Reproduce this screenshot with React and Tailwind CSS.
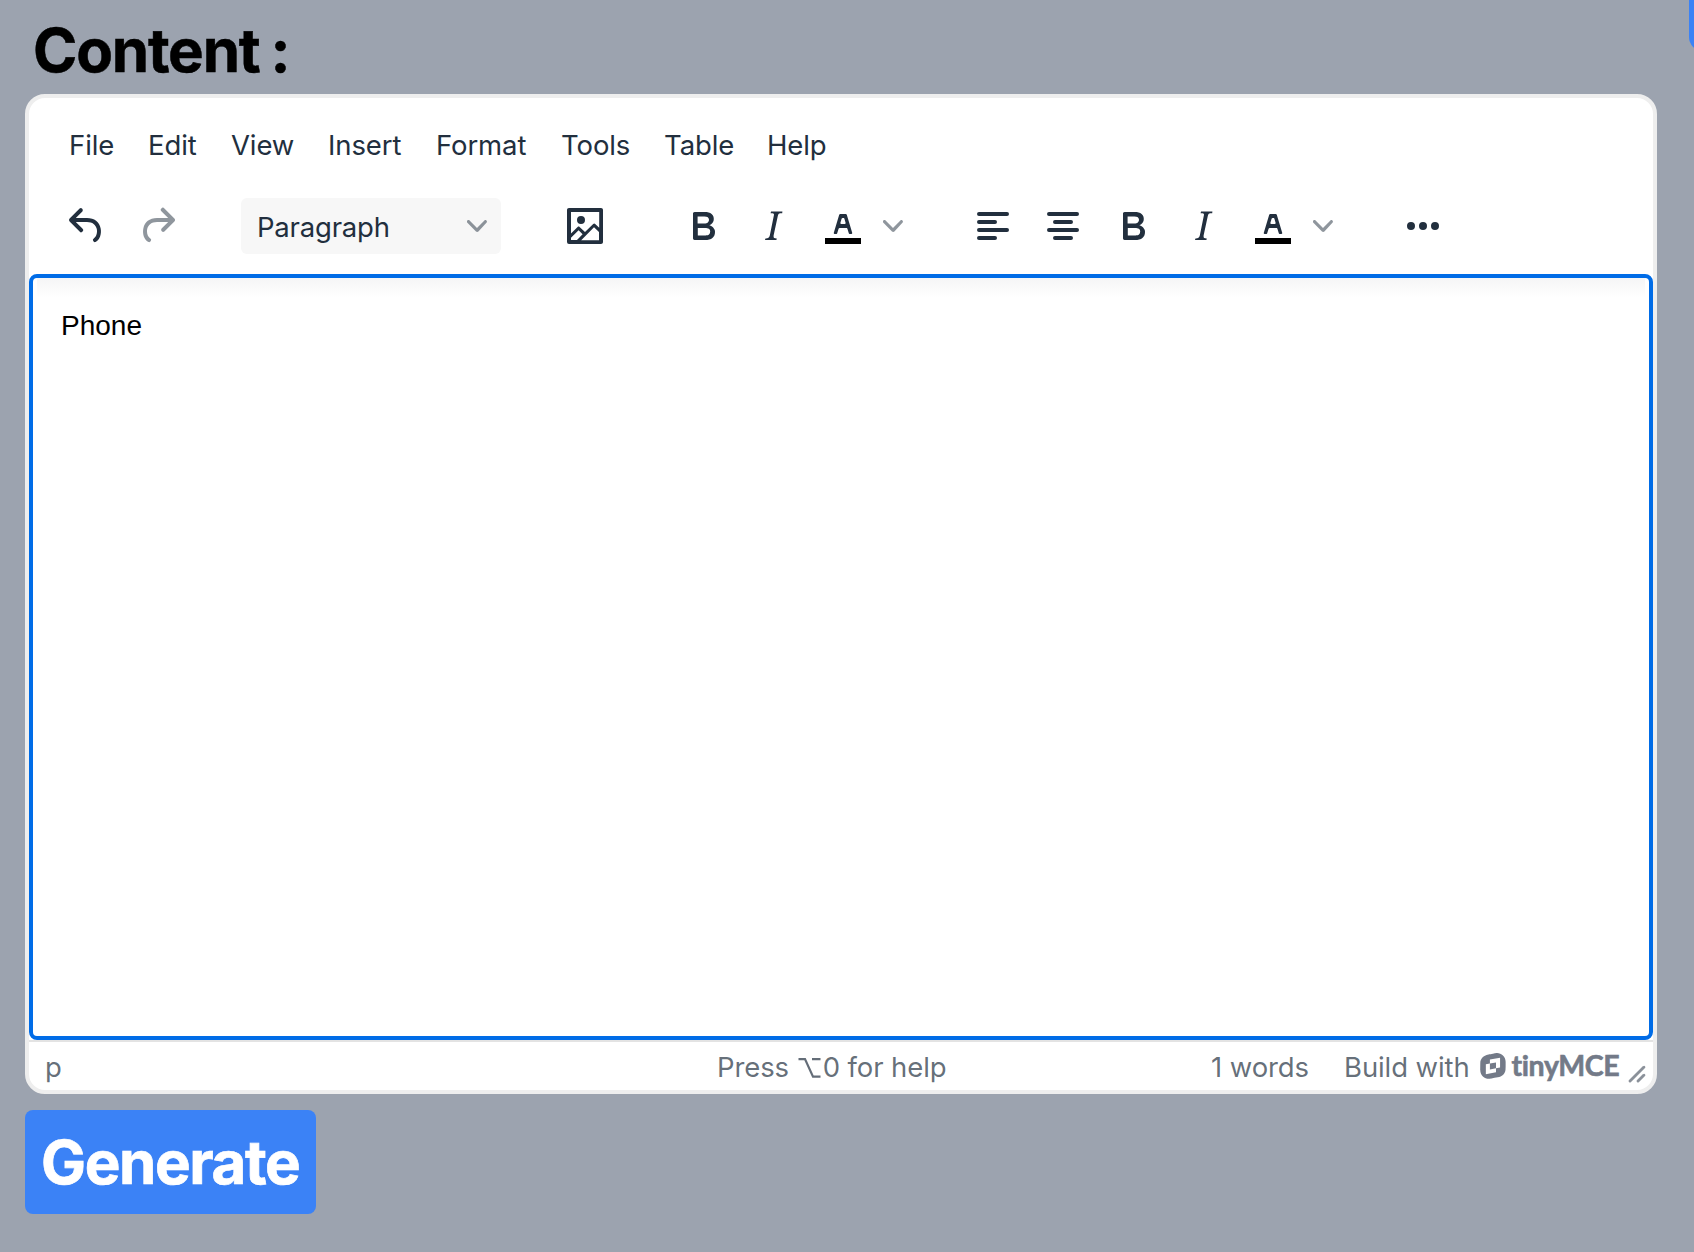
const ICONS = {
  undo: "M6.4 8H12c3.7 0 6.2 2 6.8 5.1.6 2.7-.4 5.6-2.3 6.8a1 1 0 0 1-1-1.8c1.1-.6 1.8-2.7 1.4-4.6-.5-2.1-2.1-3.5-4.9-3.5H6.4l3.3 3.3a1 1 0 1 1-1.4 1.4l-5-5a1 1 0 0 1 0-1.4l5-5a1 1 0 0 1 1.4 1.4L6.4 8Z",
  redo: "M17.6 10H12c-2.8 0-4.4 1.4-4.9 3.5-.4 2 .3 4 1.4 4.6a1 1 0 1 1-1 1.8c-2-1.2-2.9-4.1-2.3-6.8.6-3 3-5.1 6.8-5.1h5.6l-3.3-3.3a1 1 0 1 1 1.4-1.4l5 5a1 1 0 0 1 0 1.4l-5 5a1 1 0 0 1-1.4-1.4l3.3-3.3Z",
  image: "m5 15.7 3.3-3.2c.3-.3.7-.3 1 0L12 15l4.1-4c.3-.4.8-.4 1 0l2 1.9V5H5v10.7ZM5 18V19h3l2.8-2.9-2-2L5 17.9Zm14-3-2.5-2.4-6.4 6.5H19v-4ZM4 3h16c.6 0 1 .4 1 1v16c0 .6-.4 1-1 1H4a1 1 0 0 1-1-1V4c0-.6.4-1 1-1Zm6 8a2 2 0 1 0 0-4 2 2 0 0 0 0 4Z",
  bold: "M7.8 19c-.3 0-.5 0-.6-.2l-.2-.5V5.7c0-.2 0-.4.2-.5l.6-.2h5c1.5 0 2.7.3 3.5 1 .7.6 1.1 1.4 1.1 2.5a3 3 0 0 1-.6 1.9c-.4.6-1 1-1.6 1.2.4.1.9.3 1.3.6s.8.7 1 1.2c.4.4.5 1 .5 1.6 0 1.3-.4 2.3-1.3 3-.8.7-2.1 1-3.8 1H7.8Zm5-8.3c.6 0 1.2-.1 1.6-.5.4-.3.6-.7.6-1.3 0-1.1-.8-1.7-2.3-1.7H9.3v3.5h3.4Zm.5 6c.7 0 1.3-.1 1.7-.4.4-.4.6-.9.6-1.5s-.2-1-.7-1.4c-.4-.3-1-.4-2-.4H9.4v3.8h4Z",
  italic: "m16.7 4.7-.1.9h-.3c-.6 0-1 0-1.4.3-.3.3-.4.6-.5 1.1l-2.1 9.8v.6c0 .5.4.8 1.4.8h.2l-.2.8H8l.2-.8h.2c1.1 0 1.8-.5 2-1.5l2-9.8.1-.5c0-.6-.4-.8-1.4-.8h-.3l.2-.9h5.8Z",
  alignLeft: "M5 5h14a1 1 0 0 1 0 2H5a1 1 0 1 1 0-2Zm0 4h8a1 1 0 0 1 0 2H5a1 1 0 1 1 0-2Zm0 8h8a1 1 0 0 1 0 2H5a1 1 0 0 1 0-2Zm0-4h14a1 1 0 0 1 0 2H5a1 1 0 0 1 0-2Z",
  alignCenter: "M5 5h14a1 1 0 0 1 0 2H5a1 1 0 1 1 0-2Zm3 4h8a1 1 0 0 1 0 2H8a1 1 0 1 1 0-2Zm0 8h8a1 1 0 0 1 0 2H8a1 1 0 0 1 0-2Zm-3-4h14a1 1 0 0 1 0 2H5a1 1 0 0 1 0-2Z",
  more: "M6 10a2 2 0 1 0 0 4 2 2 0 0 0 0-4Zm12 0a2 2 0 1 0 0 4 2 2 0 0 0 0-4Zm-6 0a2 2 0 1 0 0 4 2 2 0 0 0 0-4Z",
};

function ToolButton({ icon, disabled }) {
  return (
    <button className="flex h-14 w-[68px] items-center justify-center">
      <svg viewBox="0 0 24 24" className={disabled ? "size-12 opacity-50" : "size-12"} fill="currentColor">
        <path d={ICONS[icon]} />
      </svg>
    </button>
  );
}

function Chevron() {
  return (
    <svg viewBox="0 0 10 10" className="size-5 opacity-50" fill="currentColor">
      <path d="M8.7 2.2c.3-.3.8-.3 1 0 .4.4.4.9 0 1.2L5.7 7.8c-.3.3-.9.3-1.2 0L.2 3.4a.8.8 0 0 1 0-1.2c.3-.3.8-.3 1.1 0L5 6l3.7-3.8Z" />
    </svg>
  );
}

function ColorButton() {
  return (
    <div className="flex h-14">
      <button className="flex w-[68px] items-center justify-center">
        <svg viewBox="0 0 24 24" className="size-12" fill="currentColor">
          <path d="M3 18h18v3H3z" fill="#000" />
          <path d="M8.7 16h-.8a.5.5 0 0 1-.5-.6l2.7-9c.1-.3.3-.4.5-.4h2.8c.2 0 .4.1.5.4l2.7 9a.5.5 0 0 1-.5.6h-.8a.5.5 0 0 1-.4-.4l-.7-2.2c0-.3-.3-.4-.5-.4h-3.4c-.2 0-.4.1-.5.4l-.7 2.2c0 .3-.2.4-.4.4Zm2.6-7.6-.6 2a.5.5 0 0 0 .5.6h1.6a.5.5 0 0 0 .5-.6l-.6-2c0-.3-.3-.4-.5-.4h-.4c-.2 0-.4.1-.5.4Z" />
        </svg>
      </button>
      <button className="flex w-8 items-center justify-center">
        <Chevron />
      </button>
    </div>
  );
}

const MENUS = [
  ["File", "w-[79px]"],
  ["Edit", "w-[83px]"],
  ["View", "w-[97px]"],
  ["Insert", "w-[108px]"],
  ["Format", "w-[125px]"],
  ["Tools", "w-[103px]"],
  ["Table", "w-[103px]"],
  ["Help", "w-[76px]"],
];

export default function App() {
  return (
    <div className="h-[1252px] w-full overflow-hidden bg-[#9ca3af] font-['Inter',sans-serif]">
      <div className="flex h-[94px] justify-between pl-[33px]">
        <h1 className="mt-[14px] text-[60px] leading-[72px] font-bold tracking-[-1.2px] [word-spacing:-2px] [-webkit-text-stroke:0.5px_currentColor] whitespace-pre text-black">Content :</h1>
        <div className="h-[51px] w-[5px] overflow-hidden">
          <div className="h-[51px] w-20 rounded-b-[14px] bg-[#3b82f6]" />
        </div>
      </div>

      <div className="ml-[25px] flex h-[1000px] w-[1632px] flex-col overflow-hidden rounded-[20px] border-4 border-[#eee] bg-white text-[#222f3e]">
        <nav className="mt-[27px] flex h-10 pl-10 text-[27.5px] leading-10 tracking-[-0.1px]">
          {MENUS.map(([name, width]) => (
            <span key={name} className={width}>{name}</span>
          ))}
        </nav>
        <div className="mt-[33px] mb-5 flex h-14 gap-[50px] pl-6">
          <div className="flex gap-0.5">
            <ToolButton icon="undo" />
            <ToolButton icon="redo" disabled />
          </div>
          <button className="flex w-[260px] items-center justify-between rounded-md bg-[#f7f7f7] pr-3.5 pl-4 text-[27.5px] tracking-[-0.2px]">
            <span className="pt-[3px]">Paragraph</span>
            <Chevron />
          </button>
          <ToolButton icon="image" />
          <div className="flex gap-0.5">
            <ToolButton icon="bold" />
            <ToolButton icon="italic" />
            <ColorButton />
          </div>
          <div className="flex gap-0.5">
            <ToolButton icon="alignLeft" />
            <ToolButton icon="alignCenter" />
            <ToolButton icon="bold" />
            <ToolButton icon="italic" />
            <ColorButton />
          </div>
          <ToolButton icon="more" />
        </div>

        <div className="h-[766px] rounded-lg border-4 border-[#006ce7]">
          <div className="mx-1 h-5 bg-linear-to-b from-[#f5f5f6] to-white" />
          <p className="pl-[28px] font-['Liberation_Sans',sans-serif] text-[28px] leading-[56px] text-black">Phone</p>
        </div>

        <div className="flex h-[50px] items-center border-t-2 border-[#e3e3e3] pl-4 text-[27.5px] tracking-[-0.1px] text-[#222f3e]/70">
          <span className="w-[672px] pt-[3px]">p</span>
          <span className="flex w-[494px] items-center pt-[3px] whitespace-pre">
            Press{" "}
            <svg viewBox="0 0 22 22" className="mr-0.5 ml-px h-[22px] w-[23px]" fill="none" stroke="currentColor" strokeWidth="2.2" aria-label="Option">
              <path d="M0 2.1h6.5l8 17.5H22M13.5 2.1H22" />
            </svg>
            <span>0 for help</span>
          </span>
          <span className="w-[133px] pt-[3px]">1 words</span>
          <span className="pt-[3px]">Build with</span>
          <span className="ml-[10px] flex items-center text-[#737a88]">
            <svg viewBox="0 0 15.4 15.7" className="size-[26px]" fill="currentColor">
              <path fillRule="evenodd" d="M10.143 0c2.608.015 5.186 2.178 5.186 5.331 0 0 .077 3.812-.084 4.87-.361 2.41-2.164 4.074-4.65 4.496-1.453.284-2.523.49-3.212.623-.373.071-.634.122-.785.152-.184.038-.997.145-1.35.145-2.732 0-5.21-2.04-5.248-5.33 0 0 0-3.514.03-4.442.093-2.4 1.758-4.342 4.926-4.963 0 0 3.875-.752 4.036-.782.368-.07.775-.1 1.15-.1Zm1.826 2.8L5.83 3.989v2.393l-2.455.475v5.968l6.137-1.189V9.243l2.456-.476V2.8ZM5.83 6.382l3.682-.713v3.574l-3.682.713V6.382Z" />
            </svg>
            <span className="-mt-[2px] ml-[6px] w-[109px] font-['Lato',sans-serif] text-[28.5px] leading-none font-bold tracking-[-0.4px] [-webkit-text-stroke:0.6px_currentColor]">tinyMCE</span>
          </span>
          <svg viewBox="0 0 10 10" className="mt-4 ml-1.5 size-5 shrink-0 opacity-75" fill="currentColor">
            <path d="M8.1 1.1A.5.5 0 1 1 9 2l-7 7A.5.5 0 1 1 1 8l7-7ZM8.1 5.1A.5.5 0 1 1 9 6l-3 3A.5.5 0 1 1 5 8l3-3Z" />
          </svg>
        </div>
      </div>

      <button className="mt-4 ml-[25px] flex h-[104px] w-[291px] rounded-lg bg-[#3b82f6] pt-4 pl-4 text-[60px] leading-[72px] font-bold tracking-[-1.4px] [-webkit-text-stroke:0.7px_currentColor] text-white">Generate</button>
    </div>
  );
}
